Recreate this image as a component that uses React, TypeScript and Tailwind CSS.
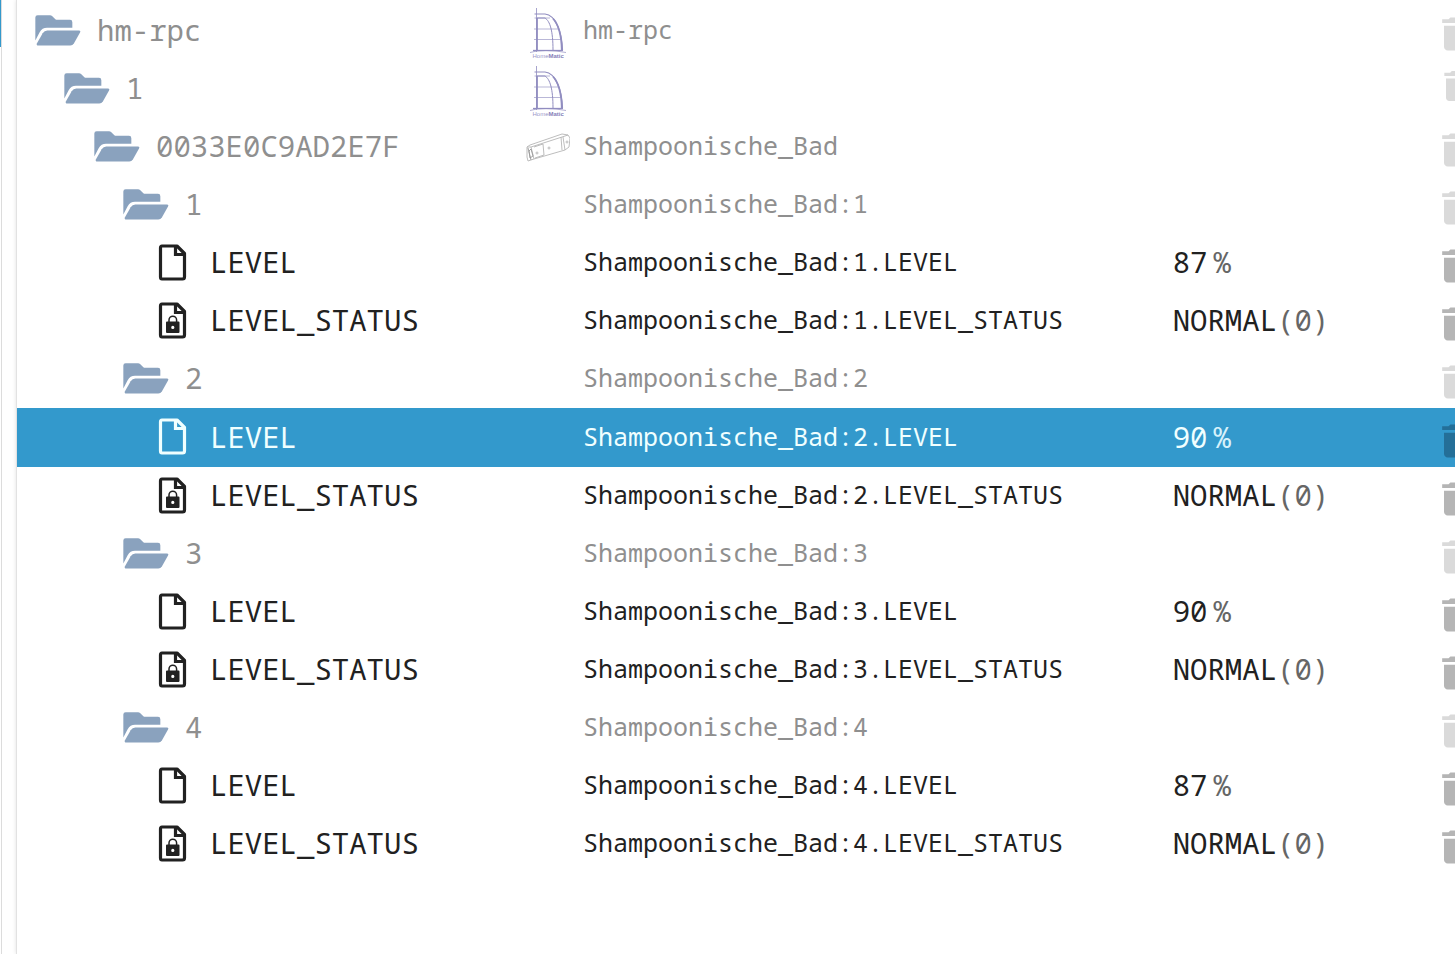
type Row = {
  id: string;
  kind: "folder" | "file" | "locked";
  level: number;
  label: string;
  name?: string;
  image?: "homematic" | "device";
  value?: string;
  suffix?: string;
  selected?: boolean;
  smallAction?: boolean;
};

const channels = [
  { id: "1", level: "87" },
  { id: "2", level: "90", selected: true },
  { id: "3", level: "90" },
  { id: "4", level: "87" },
];

const rows: Row[] = [
  { id: "root", kind: "folder", level: 0, label: "hm-rpc", name: "hm-rpc", image: "homematic" },
  { id: "instance", kind: "folder", level: 1, label: "1", image: "homematic", smallAction: true },
  { id: "device", kind: "folder", level: 2, label: "0033E0C9AD2E7F", name: "Shampoonische_Bad", image: "device" },
  ...channels.flatMap((channel): Row[] => {
    const name = `Shampoonische_Bad:${channel.id}`;
    return [
      { id: name, kind: "folder", level: 3, label: channel.id, name },
      {
        id: `${name}.LEVEL`,
        kind: "file",
        level: 4,
        label: "LEVEL",
        name: `${name}.LEVEL`,
        value: channel.level,
        suffix: "%",
        selected: channel.selected,
      },
      {
        id: `${name}.LEVEL_STATUS`,
        kind: "locked",
        level: 4,
        label: "LEVEL_STATUS",
        name: `${name}.LEVEL_STATUS`,
        value: "NORMAL",
        suffix: "(0)",
      },
    ];
  }),
];

const indents = ["pl-[18px]", "pl-[47px]", "pl-[77px]", "pl-[106px]", "pl-[141px]"];

const FolderIcon = () => (
  <svg viewBox="0 0 138 92" className="h-[31px] w-[46px] shrink-0 fill-[#8aa2be]" aria-hidden="true">
    <path d="M1 7Q1 0 8 0H45Q49 0 52 3L61 12Q63 14 67 14H105Q112 14 112 21V38H36C26 38 19 42 14 51L1 76Z" />
    <path d="M37 46H132Q138 46 135 52L117 84Q113 91 106 91H10Q3 91 6 84L23 54Q28 46 37 46Z" />
  </svg>
);

const FileIcon = ({ locked }: { locked: boolean }) => (
  <svg viewBox="0 0 29 37" className="h-[37px] w-[29px] shrink-0" aria-hidden="true">
    <path
      d="M4 2H19L26.500 9.500V33Q26.500 35 24.500 35H4Q2.500 35 2.500 33V4Q2.500 2 4 2Z"
      fill="none"
      stroke="currentColor"
      strokeWidth="3.200"
      strokeLinejoin="round"
    />
    <path d="M17.500 2V10.500H26.500" fill="none" stroke="currentColor" strokeWidth="3.200" />
    {locked && (
      <>
        <path d="M11 20.500V18a3.800 3.800 0 0 1 7.600 0V20.500" fill="none" stroke="currentColor" strokeWidth="1.500" />
        <path
          d="M9 19.500H20.500Q21.500 19.500 21.500 20.500V30Q21.500 31 20.500 31H9Q8 31 8 30V20.500Q8 19.500 9 19.500ZM14.800 23.800a1.600 1.600 0 1 0 0 3.200a1.600 1.600 0 0 0 0-3.200Z"
          fill="currentColor"
          fillRule="evenodd"
        />
      </>
    )}
  </svg>
);

const HomematicLogo = () => (
  <svg viewBox="-2 -5 42 58" className="h-[58px] w-[42px]" role="img" aria-label="HomeMatic">
    <g fill="none" stroke="#918dc0">
      <path d="M8.500 1V45" strokeWidth="0.800" />
      <path d="M9 11V44" strokeWidth="1.800" />
      <path d="M6.500 7H17C28 8 34 26 34.500 43" strokeWidth="1.200" />
      <path d="M25 11.500C31 18 33.500 31 33.800 43" strokeWidth="1.800" />
      <path d="M9 11H17C22 14 25 24 25 43" strokeWidth="1" />
      <path d="M6.500 11H22M6 22H31M6 32.500H33" strokeWidth="0.800" opacity="0.8" />
      <path d="M5 43.500H35" strokeWidth="1.300" />
      <path d="M2 45.500Q8 43.500 18 43.500T38 45.500" strokeWidth="0.700" />
    </g>
    <text x="4.500" y="50.500" fontSize="6" fontFamily="Liberation Sans, sans-serif" fill="#9a95c8">
      Home
      <tspan fontWeight="bold" fill="#8580b8">Matic</tspan>
    </text>
  </svg>
);

const DeviceImage = () => (
  <svg viewBox="0 0 44 30" className="h-[30px] w-11" fill="none" stroke="#b5b5b5" strokeWidth="0.900" role="img" aria-label="Device">
    <path d="M1 15L4 13L36 2L42 3L44 6L43 15L39 18L8 27L2 29L1 25Z" />
    <path d="M5 15L36 5L42 3M5 15L8 27M1 15L5 15M37 5L39 18M35 5L36 18" />
    <path d="M2 16L5 28M3 19L5 17L7 24L4 26Z" stroke="#999" />
    <path d="M8 15L17 12L18 23L9 26" />
    <circle cx="11" cy="21" r="1" />
    <circle cx="23" cy="16" r="1" />
    <circle cx="41" cy="10" r="1" />
  </svg>
);

const DeleteButton = ({ row }: { row: Row }) => {
  const size = row.smallAction ? "-mt-1.5 ml-[3px] size-10" : "mt-1.5 size-11";
  const tone = row.selected ? "text-[#246f98]" : row.kind === "folder" ? "text-[#dadada]" : "text-[#b5b5b5]";
  return (
    <button type="button" aria-label={`Delete ${row.label}`} className={`block ${tone}`}>
      <svg viewBox="0 0 24 24" className={size} fill="currentColor" aria-hidden="true">
        <path d="M6 19c0 1.100.900 2 2 2h8c1.100 0 2-.900 2-2V7.500H6V19zM19 4h-3.500l-1-1h-5l-1 1H5v2h14V4z" />
      </svg>
    </button>
  );
};

const ObjectRow = ({ row }: { row: Row }) => {
  const isFolder = row.kind === "folder";
  const tone = row.selected
    ? "h-[59px] bg-[#3399cc] text-[#f0ffff]"
    : isFolder
      ? "h-[58px] text-[#8f8f8f]"
      : "h-[58px] text-[#212121]";

  return (
    <tr className={tone} aria-selected={row.selected}>
      <td className="p-0 pb-0.5">
        <div className={`flex items-center text-[29px] leading-10 ${indents[row.level]} ${isFolder ? "gap-4" : "gap-[23px]"}`}>
          {isFolder ? <FolderIcon /> : <FileIcon locked={row.kind === "locked"} />}
          <span>{row.label}</span>
        </div>
      </td>
      <td className="p-0">
        {row.image === "homematic" && <HomematicLogo />}
        {row.image === "device" && <DeviceImage />}
      </td>
      <td className="p-0 pb-0.5 text-[25px]">{row.name}</td>
      <td className="p-0 pb-0.5 text-[29px]">
        {row.value && (
          <>
            <span>{row.value}</span>
            <span className={`${row.suffix === "%" ? "ml-1.5" : ""} ${row.selected ? "text-[#d6f1fb]" : "text-[#666]"}`}>
              {row.suffix}
            </span>
          </>
        )}
      </td>
      <td className="p-0">
        <DeleteButton row={row} />
      </td>
    </tr>
  );
};

export default function App() {
  return (
    <div className="flex min-h-screen overflow-hidden bg-white font-['Noto_Sans_Mono','Droid_Sans_Mono','DejaVu_Sans_Mono',monospace]">
      <aside className="w-0.5 shrink-0 border-r border-[#dcdcdc]">
        <div className="h-[47px] bg-[#3399cc]" />
      </aside>
      <main className="ml-[14px] min-w-0 flex-1 border-l border-[#e2e2e2] pt-0.5 shadow-[0_0_4px_rgba(0,0,0,0.12)]">
        <table className="w-full table-fixed border-collapse whitespace-nowrap text-left">
          <colgroup>
            <col className="w-[35.400%]" />
            <col className="w-[57px]" />
            <col className="w-[41%]" />
            <col />
            <col className="w-[22px]" />
          </colgroup>
          <tbody>
            {rows.map((row) => (
              <ObjectRow key={row.id} row={row} />
            ))}
          </tbody>
        </table>
      </main>
    </div>
  );
}
